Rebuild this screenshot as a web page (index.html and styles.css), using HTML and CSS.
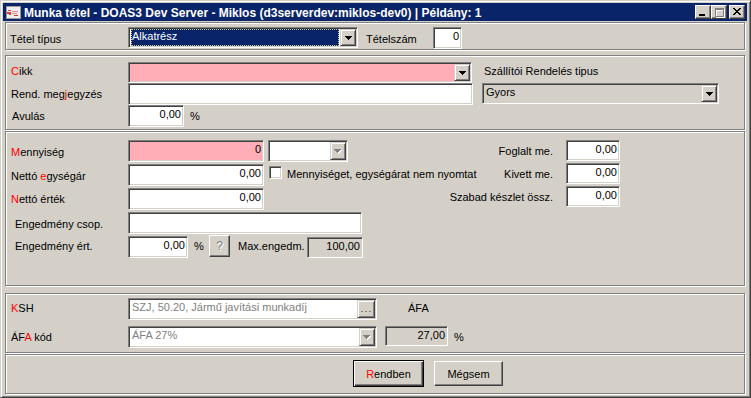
FILE: index.html
```html
<!DOCTYPE html>
<html>
<head>
<meta charset="utf-8">
<link rel="stylesheet" href="styles.css">
</head>
<body>
<div class="window">
  <div class="titlebar">
    <svg class="ticon" width="16" height="16" viewBox="0 0 16 16" shape-rendering="crispEdges">
      <rect x="1" y="2" width="14" height="12" fill="#f0eeee" stroke="#9a9a9a"/>
      <path d="M3 6h3v1h-3zM2 8h4v2h-4zM4 10h2v1h-2z" fill="#e03a3a"/>
      <path d="M7 7h6v1h-6zM7 9h5v1h-5z" fill="#d88"/>
      <path d="M9 11h4v1h-4z" fill="#c33"/>
    </svg>
    <span class="ttext">Munka tétel - DOAS3 Dev Server - Miklos (d3serverdev:miklos-dev0) | Példány: 1</span>
    <span class="tbtns">
      <span class="tbtn"><svg width="14" height="12" viewBox="0 0 14 12" shape-rendering="crispEdges"><rect x="3" y="8" width="6" height="2" fill="#000"/></svg></span>
      <span class="tbtn"><svg width="14" height="12" viewBox="0 0 14 12" shape-rendering="crispEdges"><path d="M3 2h9v9h-9zM4 4v6h7v-6z" fill="#fff" transform="translate(1 1)"/><path d="M3 2h9v9h-9zM4 4v6h7v-6z" fill="#808080" fill-rule="evenodd"/></svg></span>
      <span class="tbtn close"><svg width="14" height="12" viewBox="0 0 14 12" shape-rendering="crispEdges"><path d="M3 2h2v1h-2zM9 2h2v1h-2zM4 3h2v1h-2zM8 3h2v1h-2zM5 4h4v1h-4zM6 5h2v1h-2zM5 6h4v1h-4zM4 7h2v1h-2zM8 7h2v1h-2zM3 8h2v1h-2zM9 8h2v1h-2z" fill="#000"/></svg></span>
    </span>
  </div>

  <div class="client">
    <div class="panel p0">
      <div class="row">
        <span class="lbl w118 pt6">Tétel típus</span>
        <div class="combo w230"><span class="cval selwrap"><span class="sel">Alkatrész</span></span><span class="cbtn"><svg width="7" height="4" viewBox="0 0 7 4" shape-rendering="crispEdges"><path d="M0 0h7v1h-1v1h-1v1h-1v1h-1v-1h-1v-1h-1v-1h-1z" fill="#000"/></svg></span></div>
        <span class="lbl ml8 w67 pt6">Tételszám</span>
        <div class="edit r w29">0</div>
      </div>
    </div>

    <div class="panel p1">
      <div class="col c1left">
        <div class="row h21">
          <span class="lbl w117 pt3"><span class="acc">C</span>ikk</span>
          <div class="combo pink w344"><span class="cval"></span><span class="cbtn"><svg width="7" height="4" viewBox="0 0 7 4" shape-rendering="crispEdges"><path d="M0 0h7v1h-1v1h-1v1h-1v1h-1v-1h-1v-1h-1v-1h-1z" fill="#000"/></svg></span></div>
        </div>
        <div class="row">
          <span class="lbl w117 pt5">Rend. meg<span class="acc">j</span>egyzés</span>
          <div class="edit w345"></div>
        </div>
        <div class="row">
          <span class="lbl w117 pt5 pl1">Avulás</span>
          <div class="edit r w56">0,00</div>
          <span class="lbl ml6 pt5">%</span>
        </div>
      </div>
      <div class="col c1right">
        <span class="lbl pl2">Szállítói Rendelés tipus</span>
        <div class="combo gray w237 mt5"><span class="cval">Gyors</span><span class="cbtn"><svg width="7" height="4" viewBox="0 0 7 4" shape-rendering="crispEdges"><path d="M0 0h7v1h-1v1h-1v1h-1v1h-1v-1h-1v-1h-1v-1h-1z" fill="#000"/></svg></span></div>
      </div>
    </div>

    <div class="panel p2">
      <div class="col c2left">
        <div class="row">
          <span class="lbl w117 pt6"><span class="acc">M</span>ennyiség</span>
          <div class="edit r pink w136">0</div>
          <div class="combo h22 w80 ml4"><span class="cval"></span><span class="cbtn"><svg width="8" height="5" viewBox="0 0 8 5" shape-rendering="crispEdges"><path d="M1 1h7v1h-1v1h-1v1h-1v1h-1v-1h-1v-1h-1v-1h-1z" fill="#fff"/><path d="M0 0h7v1h-1v1h-1v1h-1v1h-1v-1h-1v-1h-1v-1h-1z" fill="#808080"/></svg></span></div>
        </div>
        <div class="row">
          <span class="lbl w117 pt6">Nettó <span class="acc">e</span>gységár</span>
          <div class="edit r w136">0,00</div>
          <span class="chk"></span>
          <span class="lbl ml5 pt4">Mennyiséget, egységárat nem nyomtat</span>
        </div>
        <div class="row">
          <span class="lbl w117 pt5"><span class="acc">N</span>ettó érték</span>
          <div class="edit r w136">0,00</div>
        </div>
        <div class="row">
          <span class="lbl w117 pt6 pl4">Engedmény csop.</span>
          <div class="edit w234"></div>
        </div>
        <div class="row">
          <span class="lbl w117 pt4 pl4">Engedmény ért.</span>
          <div class="edit r w60">0,00</div>
          <span class="lbl ml6 pt4 w10">%</span>
          <span class="btn qbtn">?</span>
          <span class="lbl ml8 pt4 w69">Max.engedm.</span>
          <div class="edit r gray w56 h21 mt1">100,00</div>
        </div>
      </div>
      <div class="col c2right">
        <div class="row">
          <span class="lbl rlbl pt5">Foglalt me.</span>
          <div class="edit r w54 h21">0,00</div>
        </div>
        <div class="row">
          <span class="lbl rlbl pt5">Kivett me.</span>
          <div class="edit r w54 h21">0,00</div>
        </div>
        <div class="row">
          <span class="lbl rlbl pt5">Szabad készlet össz.</span>
          <div class="edit r w54 h21">0,00</div>
        </div>
      </div>
    </div>

    <div class="panel p3">
      <div class="col c3">
        <div class="row">
          <span class="lbl w117 pt4"><span class="acc">K</span>SH</span>
          <div class="edit withbtn w249"><span class="etext dis">SZJ, 50.20, Jármű javítási munkadíj</span><span class="cbtn ebtn"><svg width="10" height="2" viewBox="0 0 10 2" shape-rendering="crispEdges"><path d="M0 0h2v1h-2zM4 0h2v1h-2zM8 0h2v1h-2z" fill="#808080"/></svg></span></div>
          <span class="lbl ml31 pt4">ÁFA</span>
        </div>
        <div class="row">
          <span class="lbl w117 pt5">ÁF<span class="acc">A</span> kód</span>
          <div class="combo h22 w249"><span class="cval dis">ÁFA 27%</span><span class="cbtn"><svg width="8" height="5" viewBox="0 0 8 5" shape-rendering="crispEdges"><path d="M1 1h7v1h-1v1h-1v1h-1v1h-1v-1h-1v-1h-1v-1h-1z" fill="#fff"/><path d="M0 0h7v1h-1v1h-1v1h-1v1h-1v-1h-1v-1h-1v-1h-1z" fill="#808080"/></svg></span></div>
          <div class="edit r gray w63 h20 ml8">27,00</div>
          <span class="lbl ml6 pt5">%</span>
        </div>
      </div>
    </div>

    <div class="panel p4">
      <div class="row">
        <span class="btn def bok"><span class="acc">R</span>endben</span>
        <span class="btn bcancel">Mégsem</span>
      </div>
    </div>
  </div>
</div>
</body>
</html>
```

FILE: styles.css
```css
* { box-sizing: border-box; }

body {
  margin: 0;
  background: #d4d0c8;
  font-family: "Liberation Sans", Arial, sans-serif;
  font-size: 11px;
  color: #000;
}

.window {
  width: 751px;
  height: 398px;
  border: 1px solid;
  border-color: #d4d0c8 #404040 #404040 #d4d0c8;
  box-shadow: inset 1px 1px #fff, inset -1px -1px #808080;
  padding: 2px 3px 1px 2px;
  display: flex;
  flex-direction: column;
  background: #d4d0c8;
}

/* title bar */
.titlebar {
  height: 18px;
  flex-shrink: 0;
  background: #0a246a;
  display: flex;
  align-items: center;
  color: #fff;
  font-weight: bold;
}
.ticon { margin-left: 2px; display: block; flex-shrink: 0; }
.ttext { margin-left: 3px; white-space: nowrap; line-height: 18px; padding-top: 1px; font-size: 12px; }
.tbtns { margin-left: auto; display: flex; margin-right: 2px; }
.tbtn {
  width: 16px;
  height: 14px;
  background: #d4d0c8;
  border: 1px solid;
  border-color: #fff #404040 #404040 #fff;
  box-shadow: inset -1px -1px #808080;
  display: block;
}
.tbtn svg { display: block; }
.tbtn.close { margin-left: 2px; }

/* client */
.client {
  display: flex;
  flex-direction: column;
  padding-left: 2px;
}
.panel {
  width: 740px;
  flex-shrink: 0;
  border: 1px solid #808080;
  box-shadow: inset 1px 1px #fff, 1px 1px #fff;
}
.p0 { margin-top: 1px; height: 28px; padding: 4px 0 0 4px; }
.p1 { margin-top: 5px; height: 75px; display: flex; }
.p2 { margin-top: 1px; height: 155px; display: flex; }
.p3 { margin-top: 7px; height: 60px; }
.p4 { margin-top: 1px; height: 40px; }

.col { display: flex; flex-direction: column; flex-shrink: 0; }
.c1left { width: 467px; padding: 6px 0 0 5px; }
.c1right { margin-left: 9px; padding-top: 9px; }
.c2left { width: 430px; padding: 8px 0 0 5px; gap: 2px; }
.c2right { padding-top: 8px; gap: 2px; }
.c3 { padding: 4px 0 0 5px; gap: 6px; }

.row { display: flex; align-items: flex-start; }
.row > * { flex-shrink: 0; }

.lbl { line-height: 13px; white-space: nowrap; }
.rlbl { width: 117px; text-align: right; margin-right: 13px; }
.acc { color: #ff0000; }
.dis { color: #808080; }

/* edits */
.edit {
  height: 22px;
  background: #fff;
  border: 1px solid;
  border-color: #808080 #fff #fff #808080;
  box-shadow: inset 1px 1px #404040, inset -1px -1px #d4d0c8;
  padding: 1px 3px 0 3px;
  line-height: 15px;
  white-space: nowrap;
  overflow: hidden;
}
.edit.r { text-align: right; padding-right: 2px; }
.edit.withbtn { display: flex; padding: 1px; }
.etext { flex: 1; padding-left: 2px; overflow: hidden; white-space: nowrap; }
.pink { background: #ffadb6; }
.gray { background: #d4d0c8; }

/* combo */
.combo {
  display: flex;
  height: 21px;
  padding: 1px;
  background: #fff;
  border: 1px solid;
  border-color: #808080 #fff #fff #808080;
  box-shadow: inset 1px 1px #404040, inset -1px -1px #d4d0c8;
}
.combo.gray { background: #d4d0c8; }
.combo.pink { background: #ffadb6; }
.cval {
  flex: 1;
  padding-left: 2px;
  line-height: 15px;
  overflow: hidden;
  white-space: nowrap;
}
.selwrap { padding: 0 1px 0 1px; }
.sel {
  display: block;
  height: 17px;
  background: #0a246a;
  color: #fff;
  border: 1px dotted #c8c890;
  line-height: 13px;
  padding-left: 0;
}
.cbtn {
  width: 16px;
  flex-shrink: 0;
  background: #d4d0c8;
  border: 1px solid;
  border-color: #d4d0c8 #404040 #404040 #d4d0c8;
  box-shadow: inset 1px 1px #fff, inset -1px -1px #808080;
  display: flex;
  align-items: center;
  justify-content: center;
}
.cbtn svg { display: block; }
.ebtn { width: 18px; padding-top: 5px; }

/* checkbox */
.chk {
  width: 13px;
  height: 13px;
  margin: 2px 0 0 5px;
  background: #fff;
  border: 1px solid;
  border-color: #808080 #fff #fff #808080;
  box-shadow: inset 1px 1px #404040, inset -1px -1px #d4d0c8;
}

/* buttons */
.btn {
  display: flex;
  align-items: center;
  justify-content: center;
  background: #d4d0c8;
  border: 1px solid;
  border-color: #fff #404040 #404040 #fff;
  box-shadow: inset -1px -1px #808080;
  white-space: nowrap;
}
.btn.def {
  border: 1px solid #000;
  box-shadow: inset 1px 1px #fff, inset -1px -1px #404040, inset -2px -2px #808080;
}
.qbtn {
  width: 21px;
  height: 22px;
  margin: -1px 0 0 5px;
  color: #808080;
  text-shadow: 1px 1px #fff;
  font-size: 12px;
}
.bok { width: 71px; height: 27px; margin: 5px 0 0 347px; }
.bcancel { width: 69px; height: 25px; margin: 6px 0 0 10px; }

/* sizes */
.w10 { width: 10px; }
.w29 { width: 29px; }
.w54 { width: 54px; }
.w56 { width: 56px; }
.w60 { width: 60px; }
.w63 { width: 63px; }
.w67 { width: 67px; }
.w69 { width: 69px; }
.w80 { width: 80px; }
.w117 { width: 117px; }
.w118 { width: 118px; }
.w136 { width: 136px; }
.w230 { width: 230px; }
.w234 { width: 234px; }
.w237 { width: 237px; }
.w249 { width: 249px; }
.w344 { width: 344px; }
.w345 { width: 345px; }
.h20 { height: 20px; }
.h21 { height: 21px; }
.h22 { height: 22px; }
.pt3 { padding-top: 3px; }
.pt4 { padding-top: 4px; }
.pt5 { padding-top: 5px; }
.pt6 { padding-top: 6px; }
.pl1 { padding-left: 1px; }
.pl2 { padding-left: 2px; }
.pl4 { padding-left: 4px; }
.ml4 { margin-left: 4px; }
.ml5 { margin-left: 5px; }
.ml6 { margin-left: 6px; }
.ml8 { margin-left: 8px; }
.ml31 { margin-left: 31px; }
.mt1 { margin-top: 1px; }
.mt5 { margin-top: 5px; }
```
